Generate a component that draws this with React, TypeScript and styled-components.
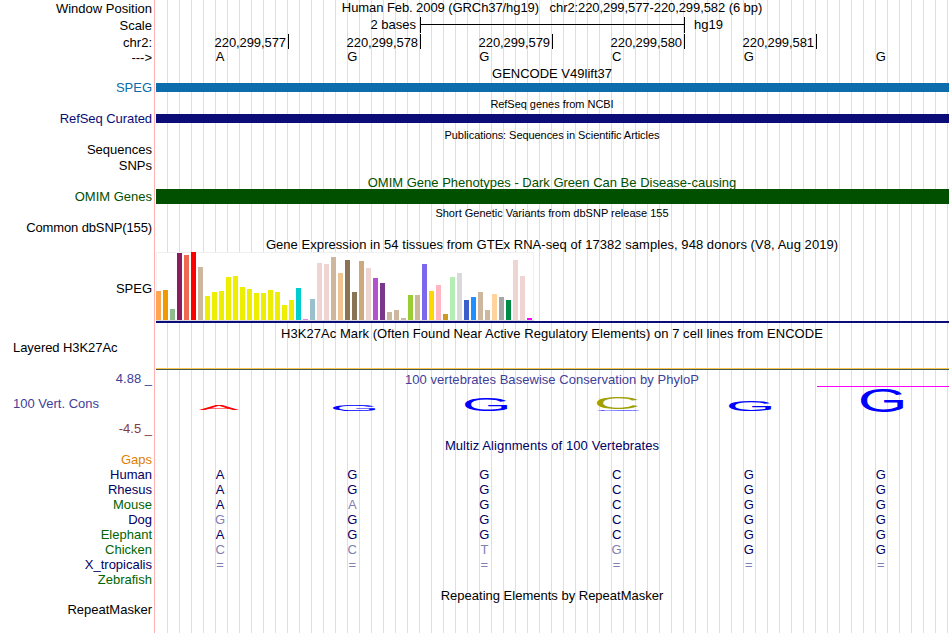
import React from "react";
import styled, { createGlobalStyle } from "styled-components";

interface Species {
  name: string;
  bases: string;
  inexact?: number[];
  color: string;
}

interface LogoLetter {
  letter: string;
  x: number;
  y: number;
  width: number;
  height: number;
  color: string;
}

const NAVY = "#0c0c78";
const TEXT_NAVY = "#000064";
const GREEN = "#005000";
const LABEL_GREEN = "#006400";
const PURPLE = "#404098";

const positions = ["220,299,577", "220,299,578", "220,299,579", "220,299,580", "220,299,581"];

const tissues: [number, string][] = [
  [29, "#ffa54f"], [30, "#ee9a00"], [11, "#8fbc8f"], [67, "#8b1c62"], [65, "#ee6a50"], [68, "#ff0000"],
  [53, "#cdb79e"], [24, "#eeee00"], [28, "#eeee00"], [29, "#eeee00"], [43, "#eeee00"], [44, "#eeee00"],
  [33, "#eeee00"], [31, "#eeee00"], [27, "#eeee00"], [27, "#eeee00"], [30, "#eeee00"], [28, "#eeee00"],
  [15, "#eeee00"], [20, "#eeee00"], [32, "#00cdcd"], [1, "#ee82ee"], [21, "#9ac0cd"], [57, "#eed5d2"],
  [56, "#eed5d2"], [63, "#cdb79e"], [47, "#eec591"], [60, "#8b7355"], [28, "#8b7355"], [59, "#cdaa7d"],
  [52, "#eed5d2"], [42, "#b452cd"], [37, "#7a378b"], [8, "#cdb79e"], [10, "#cdb79e"], [2, "#cdb79e"],
  [25, "#9acd32"], [25, "#cdb79e"], [56, "#7a67ee"], [29, "#ffd700"], [35, "#ffb6c1"], [6, "#cd9b1d"],
  [43, "#b4eeb4"], [47, "#d9d9d9"], [20, "#3a5fcd"], [23, "#1e90ff"], [28, "#cdb79e"], [10, "#cdb79e"],
  [26, "#ffd39b"], [23, "#a6a6a6"], [20, "#008b45"], [60, "#eed5d2"], [44, "#eed5d2"], [2, "#ff00ff"],
];

const species: Species[] = [
  { name: "Human", bases: "AGGCGG", color: TEXT_NAVY },
  { name: "Rhesus", bases: "AGGCGG", color: TEXT_NAVY },
  { name: "Mouse", bases: "AAGCGG", inexact: [1], color: LABEL_GREEN },
  { name: "Dog", bases: "GGGCGG", inexact: [0], color: TEXT_NAVY },
  { name: "Elephant", bases: "AGGCGG", color: LABEL_GREEN },
  { name: "Chicken", bases: "CCTGGG", inexact: [0, 1, 2, 3], color: LABEL_GREEN },
  { name: "X_tropicalis", bases: "======", inexact: [0, 1, 2, 3, 4, 5], color: TEXT_NAVY },
  { name: "Zebrafish", bases: "", color: LABEL_GREEN },
];

// x and y are relative to the plot, which starts right under the track title
const logo: LogoLetter[] = [
  { letter: "A", x: 43, y: 17.8, width: 40, height: 5.2, color: "#ff0000" },
  { letter: "G", x: 177, y: 17, width: 43, height: 7, color: "#0000ff" },
  { letter: "G", x: 309, y: 11, width: 43, height: 13, color: "#0000ff" },
  { letter: "C", x: 441, y: 10.3, width: 41, height: 12, color: "#a0a000" },
  { letter: "G", x: 441, y: 22.3, width: 43, height: 1.7, color: "#0000ff" },
  { letter: "G", x: 573, y: 14, width: 43, height: 10, color: "#0000ff" },
  { letter: "G", x: 705, y: 1, width: 43, height: 24, color: "#0000ff" },
];

// ink boxes of the letters at font-size 100
const glyphs: Record<string, { left: number; width: number; bottom: number; height: number }> = {
  A: { left: 0.3, width: 66, bottom: 0, height: 68.8 },
  C: { left: 5, width: 63.5, bottom: 1, height: 71 },
  G: { left: 5, width: 67, bottom: 1, height: 71 },
};

const Letter = ({ letter, x, y, width, height, color }: LogoLetter) => {
  const glyph = glyphs[letter];
  const sx = width / glyph.width;
  const sy = height / glyph.height;
  const tx = x - glyph.left * sx;
  const ty = y + height - glyph.bottom * sy;
  return (
    <LogoText fill={color} transform={`translate(${tx} ${ty}) scale(${sx} ${sy})`}>
      {letter}
    </LogoText>
  );
};

const Bases = ({ bases, inexact = [], color }: { bases: string; inexact?: number[]; color?: string }) => (
  <BaseRow>
    {bases.split("").map((base, i) => (
      <Base key={i} $color={inexact.includes(i) ? "#8080b4" : color}>
        {base}
      </Base>
    ))}
  </BaseRow>
);

const App = () => {
  return (
    <Page>
      <GlobalStyle />
      <Track $height={66}>
        <Side>
          <Label $gap={1}>Window Position</Label>
          <Label $gap={2}>Scale</Label>
          <Label $gap={2}>chr2:</Label>
          <Label>---&gt;</Label>
        </Side>
        <Data>
          <Title $spacing={-0.08}>Human Feb. 2009 (GRCh37/hg19) &nbsp; chr2:220,299,577-220,299,582 (6 bp)</Title>
          <ScaleRow>
            <ScaleText>2 bases</ScaleText>
            <ScaleBar>
              <ScaleLine />
            </ScaleBar>
            <Assembly>hg19</Assembly>
          </ScaleRow>
          <PositionRow>
            {positions.map((position) => (
              <Position key={position}>{position}</Position>
            ))}
          </PositionRow>
          <Bases bases="AGGCGG" />
        </Data>
      </Track>
      <Track $height={31}>
        <Side>
          <Label $gap={14} $color="#0c6cac">SPEG</Label>
        </Side>
        <Data>
          <Title>GENCODE V49lift37</Title>
          <GeneBar $color="#0c6cac" />
        </Data>
      </Track>
      <Track $height={31}>
        <Side>
          <Label $gap={14} $color={NAVY} $spacing={-0.07}>RefSeq Curated</Label>
        </Side>
        <Data>
          <Title $small $spacing={-0.04}>RefSeq genes from NCBI</Title>
          <GeneBar $color={NAVY} />
        </Data>
      </Track>
      <Track $height={47}>
        <Side>
          <Label $gap={14}>Sequences</Label>
          <Label $gap={1}>SNPs</Label>
        </Side>
        <Data>
          <Title $small $spacing={-0.06}>Publications: Sequences in Scientific Articles</Title>
        </Data>
      </Track>
      <Track $height={31}>
        <Side>
          <Label $gap={14} $color={GREEN}>OMIM Genes</Label>
        </Side>
        <Data>
          <Title $color={GREEN}>OMIM Gene Phenotypes - Dark Green Can Be Disease-causing</Title>
          <GeneBar $color={GREEN} $height={15} $gap={-1} />
        </Data>
      </Track>
      <Track $height={31}>
        <Side>
          <Label $gap={14} $spacing={-0.12}>Common dbSNP(155)</Label>
        </Side>
        <Data>
          <Title $small>Short Genetic Variants from dbSNP release 155</Title>
        </Data>
      </Track>
      <Track $height={89}>
        <Side>
          <Label $gap={44}>SPEG</Label>
        </Side>
        <Data>
          <Title $spacing={0.055}>
            Gene Expression in 54 tissues from GTEx RNA-seq of 17382 samples, 948 donors (V8, Aug 2019)
          </Title>
          <Expression>
            {tissues.map(([height, color], i) => (
              <TissueBar key={i} style={{ height, background: color }} />
            ))}
          </Expression>
          <GeneBar $color={NAVY} $height={2} $gap={0} />
        </Data>
      </Track>
      <Track $height={46}>
        <Side>
          <Label $gap={14} $left $spacing={-0.07}>Layered H3K27Ac</Label>
        </Side>
        <Data>
          <Title $spacing={0.05}>
            H3K27Ac Mark (Often Found Near Active Regulatory Elements) on 7 cell lines from ENCODE
          </Title>
          <Signal />
        </Data>
      </Track>
      <Track $height={66}>
        <Side>
          <Label $gap={-1} $color={PURPLE}>4.88 _</Label>
          <Label $gap={10} $color={PURPLE} $left>100 Vert. Cons</Label>
          <Label $gap={10} $color="#843c3c">-4.5 _</Label>
        </Side>
        <Data>
          <Title $color={PURPLE} $spacing={0.04}>100 vertebrates Basewise Conservation by PhyloP</Title>
          <Logo width="793" height="30" viewBox="0 0 793 30">
            {logo.map((item) => (
              <Letter key={`${item.x}-${item.letter}`} {...item} />
            ))}
            <rect x="661" y="-1" width="132" height="1" fill="#ff00ff" />
          </Logo>
        </Data>
      </Track>
      <Track $height={150}>
        <Side>
          <Label $gap={14} $color="#e08000">Gaps</Label>
          {species.map(({ name, color }) => (
            <Label key={name} $color={color}>{name}</Label>
          ))}
        </Side>
        <Data>
          <Title $color={TEXT_NAVY} $spacing={0.09}>Multiz Alignments of 100 Vertebrates</Title>
          <Alignment>
            {species.map(({ name, bases, inexact }) => (
              <Bases key={name} bases={bases} inexact={inexact} color={TEXT_NAVY} />
            ))}
          </Alignment>
        </Data>
      </Track>
      <Track $height={45}>
        <Side>
          <Label $gap={14}>RepeatMasker</Label>
        </Side>
        <Data>
          <Title>Repeating Elements by RepeatMasker</Title>
        </Data>
      </Track>
    </Page>
  );
};

export default App;

const GlobalStyle = createGlobalStyle`
  body {
    margin: 0;
    background: #ffffff;
  }
`;
const Page = styled.main`
  width: 950px;
  height: 633px;
  overflow: hidden;
  color: #000000;
  font-family: "Liberation Sans", Arial, sans-serif;
  font-size: 13px;
  line-height: 15px;
  white-space: nowrap;
`;
const Track = styled.section<{ $height: number }>`
  display: grid;
  grid-template-columns: 154px 793px;
  column-gap: 2px;
  height: ${({ $height }) => $height}px;
  background:
    linear-gradient(#ffb0b0, #ffb0b0) 154px 0 / 1px 100% no-repeat,
    repeating-linear-gradient(to right, #dcdcfa 0 1px, transparent 1px 12px) 167px 0 / 783px 100% no-repeat;
`;
const Side = styled.div`
  display: flex;
  flex-direction: column;
`;
const Label = styled.div<{ $gap?: number; $color?: string; $left?: boolean; $spacing?: number }>`
  flex: none;
  height: 15px;
  margin-top: ${({ $gap = 0 }) => $gap}px;
  padding: 0 2px 0 13px;
  color: ${({ $color = "#000000" }) => $color};
  letter-spacing: ${({ $spacing = 0 }) => $spacing}px;
  text-align: ${({ $left }) => ($left ? "left" : "right")};
`;
const Data = styled.div`
  display: flex;
  flex-direction: column;
`;
const Title = styled.div<{ $small?: boolean; $color?: string; $spacing?: number }>`
  flex: none;
  height: 15px;
  padding-right: 1px;
  color: ${({ $color = "#000000" }) => $color};
  font-size: ${({ $small }) => ($small ? 11 : 13)}px;
  letter-spacing: ${({ $spacing = 0 }) => $spacing}px;
  text-align: center;
`;
const ScaleRow = styled.div`
  display: flex;
  height: 16px;
  margin-top: 2px;
`;
const ScaleText = styled.span`
  box-sizing: border-box;
  width: 264px;
  padding-right: 4px;
  text-align: right;
`;
const ScaleBar = styled.div`
  box-sizing: border-box;
  width: 265px;
  padding-top: 7px;
  border: solid #000000;
  border-width: 0 1px;
`;
const ScaleLine = styled.div`
  height: 1px;
  background: #000000;
`;
const Assembly = styled.span`
  margin-left: 9px;
`;
const PositionRow = styled.div`
  display: flex;
  height: 15px;
  margin-top: 1px;
  padding-left: 1px;
`;
const Position = styled.div`
  box-sizing: border-box;
  width: 132px;
  padding: 1px 2px 0 0;
  border-right: 1px solid #000000;
  letter-spacing: -0.08px;
  text-align: right;
`;
const BaseRow = styled.div`
  display: grid;
  grid-template-columns: repeat(6, 1fr);
  height: 15px;
`;
const Base = styled.span<{ $color?: string }>`
  padding-right: 4px;
  color: ${({ $color = "#000000" }) => $color};
  text-align: center;
`;
const GeneBar = styled.div<{ $color: string; $height?: number; $gap?: number }>`
  flex: none;
  height: ${({ $height = 9 }) => $height}px;
  margin-top: ${({ $gap = 2 }) => $gap}px;
  background: ${({ $color }) => $color};
`;
const Expression = styled.div`
  display: flex;
  align-items: flex-end;
  gap: 2px;
  box-sizing: border-box;
  width: 378px;
  height: 69px;
  border-bottom: 1px solid #d8d8d8;
  background: #ffffff;
  box-shadow: inset 0 1px #f0f0f0, inset 1px 0 #f0f0f0, inset -1px 0 #f0f0f0;
`;
const TissueBar = styled.div`
  width: 5px;
`;
const Signal = styled.div`
  height: 1px;
  margin-top: 27px;
  border-bottom: 1px solid #445c58;
  background: #fcc44c;
`;
const Logo = styled.svg`
  display: block;
  overflow: visible;
`;
const LogoText = styled.text`
  font-size: 100px;
`;
const Alignment = styled.div`
  display: flex;
  flex-direction: column;
  margin-top: 14px;
`;
